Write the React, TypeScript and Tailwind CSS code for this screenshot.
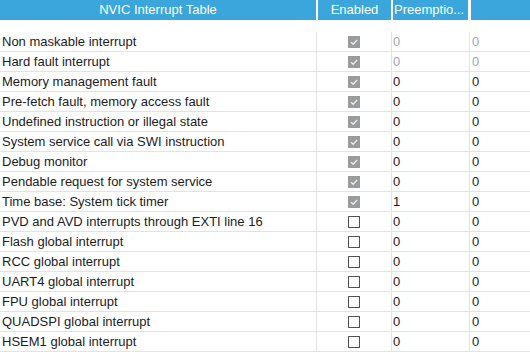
type Row = {
  name: string;
  enabled: boolean;
  preemption: number;
  sub: number;
  locked?: boolean;
};

const rows: Row[] = [
  { name: "Non maskable interrupt", enabled: true, preemption: 0, sub: 0, locked: true },
  { name: "Hard fault interrupt", enabled: true, preemption: 0, sub: 0, locked: true },
  { name: "Memory management fault", enabled: true, preemption: 0, sub: 0 },
  { name: "Pre-fetch fault, memory access fault", enabled: true, preemption: 0, sub: 0 },
  { name: "Undefined instruction or illegal state", enabled: true, preemption: 0, sub: 0 },
  { name: "System service call via SWI instruction", enabled: true, preemption: 0, sub: 0 },
  { name: "Debug monitor", enabled: true, preemption: 0, sub: 0 },
  { name: "Pendable request for system service", enabled: true, preemption: 0, sub: 0 },
  { name: "Time base: System tick timer", enabled: true, preemption: 1, sub: 0 },
  { name: "PVD and AVD interrupts through EXTI line 16", enabled: false, preemption: 0, sub: 0 },
  { name: "Flash global interrupt", enabled: false, preemption: 0, sub: 0 },
  { name: "RCC global interrupt", enabled: false, preemption: 0, sub: 0 },
  { name: "UART4 global interrupt", enabled: false, preemption: 0, sub: 0 },
  { name: "FPU global interrupt", enabled: false, preemption: 0, sub: 0 },
  { name: "QUADSPI global interrupt", enabled: false, preemption: 0, sub: 0 },
  { name: "HSEM1 global interrupt", enabled: false, preemption: 0, sub: 0 },
];

function Check({ on }: { on: boolean }) {
  if (!on) {
    return <span className="block size-[12px] border border-[#505050] bg-white" />;
  }
  return (
    <span className="flex size-[12px] items-center justify-center bg-[#9a9b9d]">
      <svg width="12" height="12" viewBox="0 0 12 12" aria-hidden>
        <path d="M3 6.2 L5.2 8.3 L9.2 3.9" fill="none" stroke="#eeeeee" strokeWidth="1.4" />
      </svg>
    </span>
  );
}

export default function App() {
  return (
    <div className="h-[352px] w-[530px] overflow-hidden bg-white font-['Liberation_Sans',Arial,sans-serif] text-[13px] text-[#1b1b1f]">
      {/* header */}
      <div className="flex h-[20px] text-white">
        <div className="flex w-[316px] items-center justify-center bg-[#3aa6dc]">NVIC Interrupt Table</div>
        <div className="ml-[2px] flex w-[73px] items-center justify-center bg-[#3aa6dc]">Enabled</div>
        <div className="ml-[2px] flex w-[75px] items-center bg-[#3aa6dc] pl-[1px]">Preemptio...</div>
        <div className="ml-[3px] flex-1 bg-[#3aa6dc]" />
      </div>
      <div className="h-[12px]" />
      {rows.map((r) => (
        <div key={r.name} className="flex h-[20px] border-b border-[#e3e3e3]">
          <div className="flex w-[317px] items-center border-r border-[#e3e3e3] pl-[2px]">{r.name}</div>
          <div className="flex w-[75px] items-center justify-center border-r border-[#e3e3e3]">
            <Check on={r.enabled} />
          </div>
          <div
            className={`flex w-[78px] items-center border-r border-[#e3e3e3] pl-[1px] ${
              r.locked ? "text-[#a2a6b6]" : ""
            }`}
          >
            {r.preemption}
          </div>
          <div className={`flex flex-1 items-center pl-[2px] ${r.locked ? "text-[#a2a6b6]" : ""}`}>{r.sub}</div>
        </div>
      ))}
    </div>
  );
}
